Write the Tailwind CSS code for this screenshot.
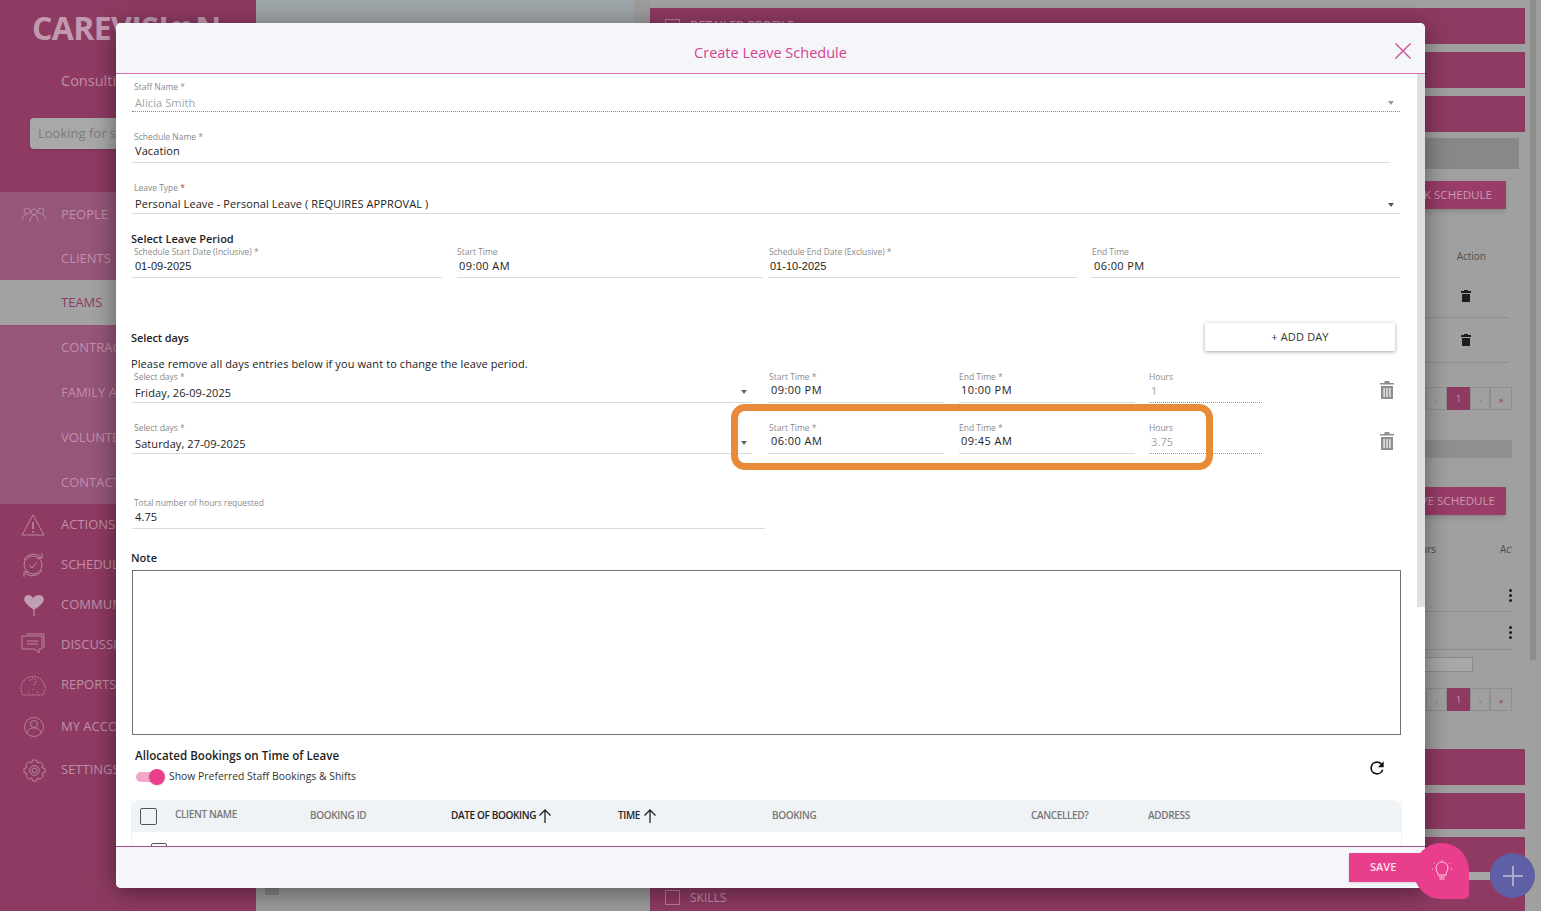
<!DOCTYPE html>
<html lang="en">
<head>
    <meta charset="UTF-8">
    <meta name="viewport" content="width=device-width, initial-scale=1.0">
    <title>Create Leave Schedule</title>
    <script src="https://cdn.jsdelivr.net/npm/@tailwindcss/browser@4"></script>
</head>
<body class="relative h-[911px] w-[1541px] overflow-hidden bg-[#a0a0a0] font-['Open_Sans',sans-serif]">

    <!-- page behind the dialog -->
    <div class="flex h-[911px]">
        <aside class="w-[256px] shrink-0 bg-[#8e3a62] text-[13px] text-[#bf90a8]">
            <div class="flex h-[56px] items-center pl-[32px] text-[32px] font-bold leading-none tracking-[-0.6px] text-[#c29ab0]">
                <span>CAREVISI</span>
                <svg class="h-[18px] w-[27px]" viewBox="0 0 34 24" fill="currentColor"><path d="M9 3a7 7 0 0 1 8 3 7 7 0 0 1 8-3c6 1 8 7 5 12-3 4-8 7-13 9-5-2-10-5-13-9C1 10 3 4 9 3z"/></svg>
                <span>N</span>
            </div>
            <div class="pl-[61px] pt-[15px] text-[14.5px] leading-[20px]">Consulting</div>
            <div class="ml-[30px] mt-[27px] flex h-[31px] w-[200px] items-center rounded-[4px] bg-[#a8a8a8] pl-[8px] text-[13px] text-[#7c7c7c] shadow-sm">Looking for staff</div>
            <div class="mt-[43px] bg-[#96557a]">
                <div class="flex h-[44px] items-center gap-[14px] pl-[21px] pt-[2px]">
                    <svg class="h-[16px] w-[26px]" viewBox="0 0 26 16" fill="none" stroke="currentColor" stroke-width="0.8"><circle cx="6" cy="4" r="3"/><circle cx="13" cy="5" r="3"/><circle cx="20" cy="4" r="3"/><path d="M1 13c0-3 2-5 4-5M9 15c0-4 2-7 4-7s4 3 4 7M25 13c0-3-2-5-4-5"/></svg>
                    <span>PEOPLE</span>
                </div>
                <div class="flex h-[44px] items-center pl-[61px] pt-[2px]">CLIENTS</div>
            </div>
            <div class="flex h-[45px] items-center bg-[#a2a2a2] pl-[61px] text-[#8e3a62]">TEAMS</div>
            <div class="bg-[#96557a]">
                <div class="flex h-[45px] items-center pl-[61px]">CONTRACTORS</div>
                <div class="flex h-[45px] items-center pl-[61px]">FAMILY AND FRIENDS</div>
                <div class="flex h-[45px] items-center pl-[61px]">VOLUNTEERS</div>
                <div class="flex h-[44px] items-center pl-[61px] pt-[2px]">CONTACTS</div>
            </div>
            <div class="flex h-[40px] items-center gap-[16px] pl-[21px] pt-[2px]">
                <svg class="h-[24px] w-[24px]" viewBox="0 0 24 24" fill="none" stroke="currentColor" stroke-width="0.9"><path d="M12 2 23 22H1z"/><path d="M12 9v7M12 18v1.500" stroke-width="1.500"/></svg>
                <span>ACTIONS</span>
            </div>
            <div class="flex h-[40px] items-center gap-[15px] pl-[20px] pt-[2px]">
                <svg class="h-[26px] w-[26px]" viewBox="0 0 26 26" fill="none" stroke="currentColor" stroke-width="0.9"><path d="M4 8a11 11 0 0 1 17-3M22 18A11 11 0 0 1 5 21"/><circle cx="13" cy="13" r="9"/><path d="m9 13 3 3 5-6M22 1v5h-5M4 25v-5h5"/></svg>
                <span>SCHEDULES</span>
            </div>
            <div class="flex h-[40px] items-center gap-[15px] pl-[22px] pt-[2px]">
                <svg class="h-[24px] w-[24px]" viewBox="0 0 24 24" fill="#bf9fb0"><path d="M6 2c2 0 4 1 5 3 2-2 3-3 6-3 4 0 6 4 4 7-2 3-6 6-9 8-3-2-7-5-9-8-2-3 0-7 3-7z"/><path d="M12 17v6" stroke="#bf9fb0"/></svg>
                <span>COMMUNICATION</span>
            </div>
            <div class="flex h-[40px] items-center gap-[16px] pl-[21px] pt-[2px]">
                <svg class="h-[24px] w-[24px]" viewBox="0 0 24 24" fill="none" stroke="currentColor" stroke-width="0.9"><path d="M1 3h20v13h-3v4l-4-4H1z"/><path d="M5 1h18v14M6 8h11M6 11h11"/></svg>
                <span>DISCUSSIONS</span>
            </div>
            <div class="flex h-[40px] items-center gap-[15px] pl-[20px] pt-[2px]">
                <svg class="h-[26px] w-[26px]" viewBox="0 0 26 26" fill="none" stroke="currentColor" stroke-width="0.9" stroke-dasharray="2 1"><path d="M3 23a12 12 0 1 1 20 0z"/><path d="M10 9a3 3 0 1 1 4 3l-1 2M13 17v1M8 20h1M17 20h1"/></svg>
                <span>REPORTS</span>
            </div>
            <div class="mt-[2px] flex h-[40px] items-center gap-[17px] pl-[24px] pt-[2px]">
                <svg class="h-[20px] w-[20px]" viewBox="0 0 20 20" fill="none" stroke="currentColor" stroke-width="0.8"><circle cx="10" cy="10" r="9.500"/><circle cx="10" cy="7" r="3.500"/><path d="M3 16c1-4 4-5 7-5s6 1 7 5"/></svg>
                <span>MY ACCOUNT</span>
            </div>
            <div class="mt-[3px] flex h-[40px] items-center gap-[15px] pl-[23px] pt-[2px]">
                <svg class="h-[23px] w-[23px]" viewBox="0 0 24 24" fill="none" stroke="currentColor" stroke-width="0.9"><path d="M10 1h4l1 3 3-1 3 3-1 3 3 1v4l-3 1 1 3-3 3-3-1-1 3h-4l-1-3-3 1-3-3 1-3-3-1v-4l3-1-1-3 3-3 3 1z"/><circle cx="12" cy="12" r="5"/><circle cx="12" cy="12" r="2.500"/></svg>
                <span>SETTINGS</span>
            </div>
        </aside>

        <section class="relative w-[394px] shrink-0 bg-[#9c9c9c]">
            <div class="h-[40px] w-[378px] bg-[#9ea5a8]"></div>
            <div class="absolute left-[9px] top-[885px] h-[10px] w-[14px] bg-[#858585]"></div>
        </section>

        <main class="w-[875px] shrink-0 text-[#c79bb1]">
            <div class="mt-[8px] flex h-[36px] items-center gap-[10px] bg-[#8e3a62] pl-[15px] text-[12px]">
                <span class="h-[15px] w-[15px] border border-[#b57f9b]"></span><span>DETAILED PROFILE</span>
            </div>
            <div class="mt-[8px] h-[36px] bg-[#8e3a62]"></div>
            <div class="mt-[8px] h-[36px] bg-[#8e3a62]"></div>
            <div class="mt-[6px] h-[31px] w-[869px] bg-[#88888b]"></div>
            <div class="ml-auto mr-[19px] mt-[12px] flex h-[28px] w-[200px] items-center justify-end bg-[#9a3c69] pr-[14px] text-[11.6px] shadow-md">TASK SCHEDULE</div>
            <div class="mr-[39px] mt-[40px] text-right text-[10px] leading-[14px] text-[#4f4f4f]">Action</div>
            <div class="ml-auto mr-[16px] mt-[12px] flex h-[43px] w-[100px] items-center justify-end border-b border-[#8f8f8f] pr-[38px]">
                <svg class="h-[12px] w-[10px]" viewBox="0 0 10 12" fill="#1d1d1d"><path d="M3 0h4v1h3v2H0V1h3zM1 4h8v8H1z"/></svg>
            </div>
            <div class="ml-auto mr-[16px] flex h-[45px] w-[100px] items-center justify-end border-b border-[#8f8f8f] pr-[38px]">
                <svg class="h-[12px] w-[10px]" viewBox="0 0 10 12" fill="#1d1d1d"><path d="M3 0h4v1h3v2H0V1h3zM1 4h8v8H1z"/></svg>
            </div>
            <div class="ml-auto mr-[13px] mt-[24px] flex h-[23px] w-[86px] text-[9px] leading-[23px] text-[#7a7a7a]">
                <span class="w-[21px] border border-[#8f8f8f] text-center">‹</span>
                <span class="w-[23px] bg-[#8e3a62] text-center text-[#c79bb1]">1</span>
                <span class="w-[20px] border border-[#8f8f8f] text-center">›</span>
                <span class="w-[22px] border border-[#8f8f8f] text-center text-[#8e3a62]">»</span>
            </div>
            <div class="ml-auto mr-[13px] mt-[30px] h-[18px] w-[200px] bg-[#8f8f92]"></div>
            <div class="ml-auto mr-[19px] mt-[29px] flex h-[28px] w-[200px] items-center justify-end bg-[#9a3c69] pr-[11px] text-[11.6px] shadow-md">LEAVE SCHEDULE</div>
            <div class="mt-[27px] flex justify-end gap-[64px] pr-[13px] text-[10px] leading-[14px] text-[#4f4f4f]"><span>Hours</span><span class="w-[12px] overflow-hidden">Action</span></div>
            <div class="ml-auto mr-[13px] mt-[31px] flex h-[25px] w-[100px] flex-col items-end border-b border-[#8f8f8f]">
                <span class="flex flex-col gap-[2px] pt-[2px]"><i class="size-[3px] rounded-full bg-[#1d1d1d]"></i><i class="size-[3px] rounded-full bg-[#1d1d1d]"></i><i class="size-[3px] rounded-full bg-[#1d1d1d]"></i></span>
            </div>
            <div class="ml-auto mr-[13px] flex h-[38px] w-[100px] flex-col items-end border-b border-[#8f8f8f]">
                <span class="flex flex-col gap-[2px] pt-[14px]"><i class="size-[3px] rounded-full bg-[#1d1d1d]"></i><i class="size-[3px] rounded-full bg-[#1d1d1d]"></i><i class="size-[3px] rounded-full bg-[#1d1d1d]"></i></span>
            </div>
            <div class="ml-[600px] mt-[7px] h-[15px] w-[223px] border border-[#8a8a8a] bg-[#a8a8a8]"></div>
            <div class="ml-auto mr-[13px] mt-[16px] flex h-[23px] w-[86px] text-[9px] leading-[23px] text-[#7a7a7a]">
                <span class="w-[21px] border border-[#8f8f8f] text-center">‹</span>
                <span class="w-[23px] bg-[#8e3a62] text-center text-[#c79bb1]">1</span>
                <span class="w-[20px] border border-[#8f8f8f] text-center">›</span>
                <span class="w-[22px] border border-[#8f8f8f] text-center text-[#8e3a62]">»</span>
            </div>
            <div class="mt-[38px] h-[36px] bg-[#8e3a62]"></div>
            <div class="mt-[8px] h-[36px] bg-[#8e3a62]"></div>
            <div class="mt-[8px] h-[74px] bg-[#8e3a62] pl-[15px] pt-[53px]">
                <div class="flex h-[15px] items-center gap-[10px] text-[12px] text-[#bf90a8]"><span class="h-[15px] w-[15px] border border-[#b57f9b]"></span><span>SKILLS</span></div>
            </div>
        </main>

        <div class="relative w-[16px] shrink-0 bg-[#a0a0a0]">
            <div class="absolute left-[5px] top-0 h-[660px] w-[6px] bg-[#8c8c8c]"></div>
        </div>
    </div>

    <!-- dialog -->
    <div class="absolute left-[116px] top-[23px] flex h-[865px] w-[1309px] flex-col overflow-hidden rounded-[5px] bg-white shadow-[0_4px_24px_rgba(0,0,0,0.45)]">
        <div class="relative flex h-[51px] shrink-0 items-center justify-center border-b border-[#d870b0] bg-[#f5f6fa] pt-[10px] text-[14.5px] text-[#d6408f]">
            Create Leave Schedule
            <svg class="absolute right-[14px] top-[20px] h-[16px] w-[16px]" viewBox="0 0 16 16" fill="none" stroke="#c9538f" stroke-width="1.400"><path d="m0.5 0.5 15 15M15.500 0.5l-15 15"/></svg>
        </div>

        <div class="relative h-[772px] shrink-0 overflow-hidden pl-[16px] pr-[25px] pt-[8px] text-[11px] tracking-[0.1px] text-[#222]">
            <div class="absolute right-0 top-0 h-[533px] w-[8px] bg-[#dfdfdf]"></div>

            <div class="relative h-[30px] border-b border-dotted border-[#8a8a8a]">
                <div class="pl-[2px] text-[8.5px] leading-[10px] tracking-normal text-[#8a8a8a]">Staff Name *</div>
                <div class="pl-[3px] pt-[3px] text-[11px] leading-[16px] text-[#a3a3a3]">Alicia Smith</div>
                <span class="absolute right-[6px] top-[19px] border-x-[3.5px] border-t-[4px] border-x-transparent border-t-[#9a9a9a]"></span>
            </div>

            <div class="mt-[21px] h-[30px] w-[1258px] border-b border-[#dcdcdc]">
                <div class="mb-[2px] pl-[2px] text-[8.5px] leading-[8px] tracking-normal text-[#8a8a8a]">Schedule Name *</div>
                <div class="pl-[3px] leading-[16px]">Vacation</div>
            </div>

            <div class="relative mt-[21px] h-[30px] border-b border-[#dcdcdc]">
                <div class="mb-[2px] pl-[2px] text-[8.5px] leading-[8px] tracking-normal text-[#8a8a8a]">Leave Type <span class="text-[#c0392b]">*</span></div>
                <div class="pl-[3px] pt-[2px] leading-[16px]">Personal Leave - Personal Leave ( REQUIRES APPROVAL )</div>
                <span class="absolute right-[6px] top-[19px] border-x-[3.5px] border-t-[4px] border-x-transparent border-t-[#555]"></span>
            </div>

            <div class="-ml-px mb-px mt-[17px] h-[16px] text-[11px] font-semibold leading-[16px] tracking-normal text-[#1f1f1f]">Select Leave Period</div>
            <div class="flex">
                <div class="h-[30px] w-[310px] border-b border-[#dcdcdc]">
                    <div class="mb-[2px] pl-[2px] text-[8.4px] leading-[8px] tracking-normal text-[#8a8a8a]">Schedule Start Date (Inclusive) *</div>
                    <div class="pl-[3px] font-['Liberation_Sans',sans-serif] leading-[16px] tracking-normal">01-09-2025</div>
                </div>
                <div class="ml-[15px] h-[30px] w-[306px] border-b border-[#dcdcdc]">
                    <div class="mb-[2px] text-[8.5px] leading-[8px] tracking-normal text-[#8a8a8a]">Start Time</div>
                    <div class="pl-[2px] leading-[16px] tracking-[0.4px]">09:00&nbsp;AM</div>
                </div>
                <div class="ml-[5px] h-[30px] w-[309px] border-b border-[#dcdcdc]">
                    <div class="mb-[2px] pl-[1px] text-[8.4px] leading-[8px] tracking-normal text-[#8a8a8a]">Schedule End Date (Exclusive) *</div>
                    <div class="pl-[2px] font-['Liberation_Sans',sans-serif] leading-[16px] tracking-normal">01-10-2025</div>
                </div>
                <div class="ml-[14px] h-[30px] w-[309px] border-b border-[#dcdcdc]">
                    <div class="mb-[2px] pl-[1px] text-[8.5px] leading-[8px] tracking-normal text-[#8a8a8a]">End Time</div>
                    <div class="pl-[3px] leading-[16px] tracking-[0.4px]">06:00&nbsp;PM</div>
                </div>
            </div>

            <div class="mt-[45px] flex h-[28px] items-center justify-between">
                <div class="-ml-px pt-[2px] text-[11px] font-semibold tracking-[-0.1px] text-[#1f1f1f]">Select days</div>
                <button class="mr-[5px] h-[28px] w-[190px] bg-white text-[11px] tracking-[0.15px] text-[#333] shadow-[0_1px_4px_rgba(0,0,0,0.35)]">+ ADD DAY</button>
            </div>
            <div class="-ml-px mt-[5px] h-[16px] leading-[16px]">Please remove all days entries below if you want to change the leave period.</div>

            <div class="mt-px flex">
                <div class="relative h-[30px] w-[620px] border-b border-[#dcdcdc]">
                    <div class="mb-[2px] pl-[2px] text-[8.5px] leading-[8px] tracking-normal text-[#8a8a8a]">Select days *</div>
                    <div class="pl-[3px] pt-[2px] leading-[16px]">Friday, 26-09-2025</div>
                    <span class="absolute right-[5px] top-[17px] border-x-[3.5px] border-t-[4px] border-x-transparent border-t-[#666]"></span>
                </div>
                <div class="ml-[16px] h-[30px] w-[176px] border-b border-[#dcdcdc]">
                    <div class="mb-[2px] pl-px text-[8.5px] leading-[8px] tracking-normal text-[#8a8a8a]">Start Time *</div>
                    <div class="pl-[3px] leading-[14px] tracking-[0.45px]">09:00&nbsp;PM</div>
                </div>
                <div class="ml-[15px] h-[30px] w-[176px] border-b border-[#dcdcdc]">
                    <div class="mb-[2px] text-[8.5px] leading-[8px] tracking-normal text-[#8a8a8a]">End Time *</div>
                    <div class="pl-[2px] leading-[14px] tracking-[0.45px]">10:00&nbsp;PM</div>
                </div>
                <div class="ml-[14px] h-[30px] w-[113px] border-b border-dotted border-[#9a9a9a]">
                    <div class="mb-[2px] text-[8.5px] leading-[8px] tracking-normal text-[#8a8a8a]">Hours</div>
                    <div class="pl-[2px] leading-[16px] text-[#a3a3a3]">1</div>
                </div>
                <svg class="ml-[118px] mt-[8px] h-[18px] w-[14px]" viewBox="0 0 14 18" fill="#8e8e8e"><path d="M5 0h4l1 2h4v1.500H0V2h4zM1 5h12v13H1zM3.500 7v9h1.200V7zM6.400 7v9h1.200V7zM9.300 7v9h1.200V7z" fill-rule="evenodd"/></svg>
            </div>

            <div class="mt-[21px] flex">
                <div class="relative h-[30px] w-[620px] border-b border-[#dcdcdc]">
                    <div class="mb-[2px] pl-[2px] text-[8.5px] leading-[8px] tracking-normal text-[#8a8a8a]">Select days *</div>
                    <div class="pl-[3px] pt-[2px] leading-[16px]">Saturday, 27-09-2025</div>
                    <span class="absolute right-[5px] top-[17px] border-x-[3.5px] border-t-[4px] border-x-transparent border-t-[#666]"></span>
                </div>
                <div class="ml-[16px] h-[30px] w-[176px] border-b border-[#dcdcdc]">
                    <div class="mb-[2px] pl-px text-[8.5px] leading-[8px] tracking-normal text-[#8a8a8a]">Start Time *</div>
                    <div class="pl-[3px] leading-[14px] tracking-[0.45px]">06:00&nbsp;AM</div>
                </div>
                <div class="ml-[15px] h-[30px] w-[176px] border-b border-[#dcdcdc]">
                    <div class="mb-[2px] text-[8.5px] leading-[8px] tracking-normal text-[#8a8a8a]">End Time *</div>
                    <div class="pl-[2px] leading-[14px] tracking-[0.45px]">09:45&nbsp;AM</div>
                </div>
                <div class="ml-[14px] h-[30px] w-[113px] border-b border-dotted border-[#9a9a9a]">
                    <div class="mb-[2px] text-[8.5px] leading-[8px] tracking-normal text-[#8a8a8a]">Hours</div>
                    <div class="pl-[2px] leading-[16px] text-[#a3a3a3]">3.75</div>
                </div>
                <svg class="ml-[118px] mt-[8px] h-[18px] w-[14px]" viewBox="0 0 14 18" fill="#8e8e8e"><path d="M5 0h4l1 2h4v1.500H0V2h4zM1 5h12v13H1zM3.500 7v9h1.200V7zM6.400 7v9h1.200V7zM9.300 7v9h1.200V7z" fill-rule="evenodd"/></svg>
            </div>

            <div class="mt-[45px] h-[30px] w-[633px] border-b border-[#dcdcdc]">
                <div class="mb-[2px] pl-[2px] text-[8.4px] leading-[8px] tracking-normal text-[#8a8a8a]">Total number of hours requested</div>
                <div class="pl-[3px] leading-[16px]">4.75</div>
            </div>

            <div class="-ml-px mt-[21px] h-[16px] text-[11px] font-semibold leading-[16px] tracking-normal text-[#1f1f1f]">Note</div>
            <div class="mt-[4px] h-[165px] w-[1269px] border border-[#707070]"></div>

            <div class="mt-[13px] flex items-center justify-between pl-[3px] pr-[13px]">
                <div>
                    <div class="h-[16px] text-[11.6px] font-semibold leading-[16px] tracking-normal text-[#1f1f1f]">Allocated Bookings on Time of Leave</div>
                    <div class="mt-[5px] flex h-[15px] items-center">
                        <div class="relative ml-px h-[10px] w-[26px] rounded-full bg-[#f2a6c8]">
                            <span class="absolute -top-[3px] right-[-3px] size-[16px] rounded-full bg-[#e83e8c] shadow-sm"></span>
                        </div>
                        <span class="ml-[7px] text-[10.4px] tracking-normal text-[#333]">Show Preferred Staff Bookings &amp; Shifts</span>
                    </div>
                </div>
                <svg class="mt-[4px] h-[20px] w-[20px]" viewBox="0 0 24 24" fill="#111"><path d="M17.650 6.350A7.960 7.960 0 0 0 12 4a8 8 0 1 0 7.730 10h-2.080A6 6 0 1 1 12 6c1.660 0 3.140.69 4.220 1.780L13 11h7V4z"/></svg>
            </div>

            <div class="-ml-px mt-[16px] w-[1271px] border-x border-[#eef0f3] tracking-normal">
                <div class="grid h-[32px] grid-cols-[43px_135px_141px_167px_154px_259px_117px_1fr] items-center rounded-t-lg bg-[#f0f3f6] text-[10px] font-semibold tracking-[-0.35px] text-[#777]">
                    <span class="ml-[8px] size-[17px] rounded-[2px] border border-[#555]"></span>
                    <span class="-mt-[3px]">CLIENT NAME</span>
                    <span class="-mt-[1px]">BOOKING ID</span>
                    <span class="-mt-[1px] flex items-center gap-[2px] text-[#222]">DATE OF BOOKING
                        <svg class="h-[14px] w-[14px]" viewBox="0 0 14 14" fill="none" stroke="#222" stroke-width="1.300"><path d="M7 14V1M1.500 6.500 7 1l5.500 5.500"/></svg>
                    </span>
                    <span class="-mt-[1px] flex items-center gap-[3px] text-[#222]">TIME
                        <svg class="h-[14px] w-[14px]" viewBox="0 0 14 14" fill="none" stroke="#222" stroke-width="1.300"><path d="M7 14V1M1.500 6.500 7 1l5.500 5.500"/></svg>
                    </span>
                    <span class="-mt-[2px]">BOOKING</span>
                    <span class="-mt-[1px]">CANCELLED?</span>
                    <span class="-mt-[1px]">ADDRESS</span>
                </div>
                <div class="h-[40px] pl-[19px] pt-[11px]">
                    <span class="block size-[16px] rounded-[2px] border border-[#555]"></span>
                </div>
            </div>
        </div>

        <div class="flex-1 border-t border-[#a5517f] bg-[#f5f6fa]"></div>
    </div>

    <!-- orange annotation -->
    <div class="absolute left-[731px] top-[404px] h-[66px] w-[482px] rounded-[14px] border-[7px] border-[#e88a38]"></div>

    <!-- save + floating buttons -->
    <button class="absolute left-[1349px] top-[853px] flex h-[29px] w-[80px] items-center bg-[#e83e8c] pl-[21px] text-[11px] font-semibold text-[#fbe3ee] shadow-sm">SAVE</button>
    <div class="absolute left-[1414px] top-[843px] flex h-[56px] w-[55px] items-center justify-center rounded-[27px] rounded-br-[5px] bg-[#e83e8c]">
        <svg class="h-[22px] w-[20px]" viewBox="0 0 20 22" fill="none" stroke="#f6d3e3" stroke-width="1"><path d="M6 15c0-3-2-4-2-7a6 6 0 0 1 12 0c0 3-2 4-2 7zM7 17h6M7.500 19h5"/><path d="M10 0v1M2 3l1 1M18 3l-1 1M0 9h1M19 9h1" stroke-dasharray="1 0.5"/></svg>
    </div>
    <div class="absolute left-[1469px] top-[872px] h-[8px] w-[21px] bg-[#a6a6a6]"></div>
    <div class="absolute left-[1490px] top-[853px] flex size-[45px] items-center justify-center rounded-full bg-[#5f5fa5]">
        <svg class="h-[20px] w-[20px]" viewBox="0 0 20 20" stroke="#a9a9cf" stroke-width="2"><path d="M10 0v20M0 10h20"/></svg>
    </div>

</body>
</html>
